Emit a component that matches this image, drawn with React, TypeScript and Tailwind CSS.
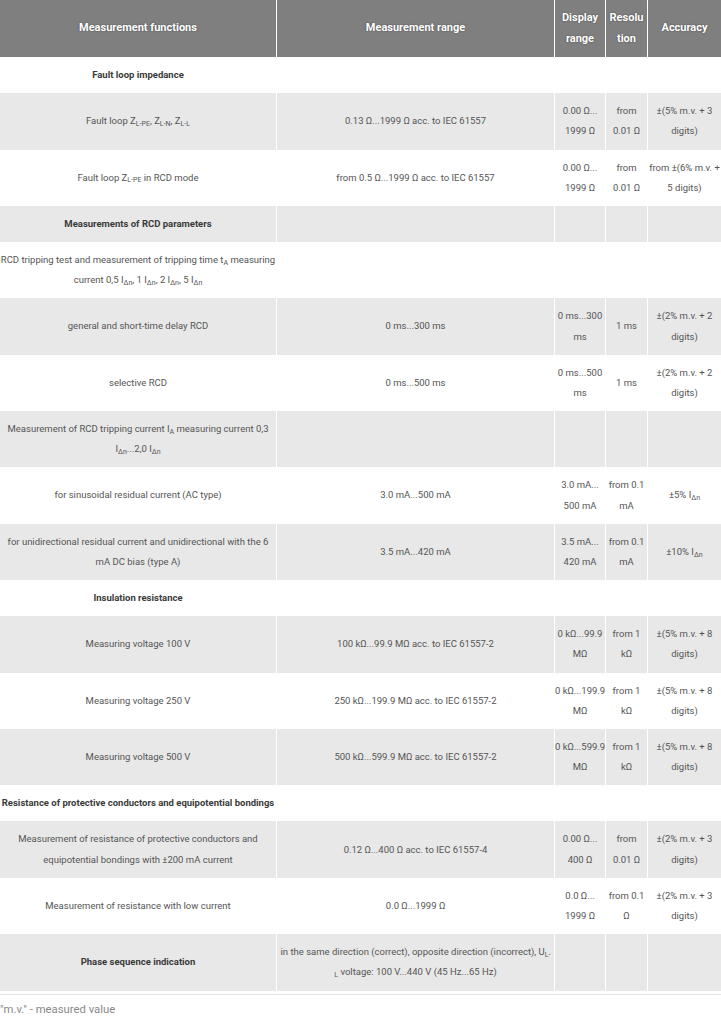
import type { ReactNode } from "react";

type Row = {
  cells: ReactNode[];
  title?: boolean;
};

const S = ({ children }: { children: ReactNode }) => (
  <sub className="text-[7px]">{children}</sub>
);

const Idn = () => (
  <>
    I<S>Δn</S>
  </>
);

const rows: Row[] = [
  { title: true, cells: ["Fault loop impedance", "", "", "", ""] },
  {
    cells: [
      <>
        Fault loop Z<S>L-PE</S>, Z<S>L-N</S>, Z<S>L-L</S>
      </>,
      "0.13 Ω...1999 Ω acc. to IEC 61557",
      "0.00 Ω... 1999 Ω",
      "from 0.01 Ω",
      "±(5% m.v. + 3 digits)",
    ],
  },
  {
    cells: [
      <>
        Fault loop Z<S>L-PE</S> in RCD mode
      </>,
      "from 0.5 Ω...1999 Ω acc. to IEC 61557",
      "0.00 Ω... 1999 Ω",
      "from 0.01 Ω",
      "from ±(6% m.v. + 5 digits)",
    ],
  },
  { title: true, cells: ["Measurements of RCD parameters", "", "", "", ""] },
  {
    cells: [
      <>
        RCD tripping test and measurement of tripping time t<S>A</S> measuring current 0,5 <Idn />, 1{" "}
        <Idn />, 2 <Idn />, 5 <Idn />
      </>,
      "",
      "",
      "",
      "",
    ],
  },
  {
    cells: [
      "general and short-time delay RCD",
      "0 ms...300 ms",
      "0 ms...300 ms",
      "1 ms",
      "±(2% m.v. + 2 digits)",
    ],
  },
  {
    cells: ["selective RCD", "0 ms...500 ms", "0 ms...500 ms", "1 ms", "±(2% m.v. + 2 digits)"],
  },
  {
    cells: [
      <>
        Measurement of RCD tripping current I<S>A</S> measuring current 0,3 <Idn />
        ...2,0 <Idn />
      </>,
      "",
      "",
      "",
      "",
    ],
  },
  {
    cells: [
      "for sinusoidal residual current (AC type)",
      "3.0 mA...500 mA",
      "3.0 mA... 500 mA",
      "from 0.1 mA",
      <>
        ±5% <Idn />
      </>,
    ],
  },
  {
    cells: [
      "for unidirectional residual current and unidirectional with the 6 mA DC bias (type A)",
      "3.5 mA...420 mA",
      "3.5 mA... 420 mA",
      "from 0.1 mA",
      <>
        ±10% <Idn />
      </>,
    ],
  },
  { title: true, cells: ["Insulation resistance", "", "", "", ""] },
  {
    cells: [
      "Measuring voltage 100 V",
      "100 kΩ...99.9 MΩ acc. to IEC 61557-2",
      "0\u00a0kΩ...99.9 MΩ",
      "from 1 kΩ",
      "±(5% m.v. + 8 digits)",
    ],
  },
  {
    cells: [
      "Measuring voltage 250 V",
      "250 kΩ...199.9 MΩ acc. to IEC 61557-2",
      "0\u00a0kΩ...199.9 MΩ",
      "from 1 kΩ",
      "±(5% m.v. + 8 digits)",
    ],
  },
  {
    cells: [
      "Measuring voltage 500 V",
      "500 kΩ...599.9 MΩ acc. to IEC 61557-2",
      "0\u00a0kΩ...599.9 MΩ",
      "from 1 kΩ",
      "±(5% m.v. + 8 digits)",
    ],
  },
  {
    title: true,
    cells: ["Resistance of protective conductors and equipotential bondings", "", "", "", ""],
  },
  {
    cells: [
      "Measurement of resistance of protective conductors and equipotential bondings with ±200 mA current",
      "0.12 Ω...400 Ω acc. to IEC 61557-4",
      "0.00 Ω... 400 Ω",
      "from 0.01 Ω",
      "±(2% m.v. + 3 digits)",
    ],
  },
  {
    cells: [
      "Measurement of resistance with low current",
      "0.0 Ω...1999 Ω",
      "0.0 Ω... 1999 Ω",
      "from 0.1 Ω",
      "±(2% m.v. + 3 digits)",
    ],
  },
  {
    title: true,
    cells: [
      "Phase sequence indication",
      <>
        in the same direction (correct), opposite direction (incorrect), U<S>L-</S>
        <br />
        <S>L</S> voltage: 100 V...440 V (45 Hz...65 Hz)
      </>,
      "",
      "",
      "",
    ],
  },
];

const headers = [
  { label: "Measurement functions", w: "w-[277px]" },
  { label: "Measurement range", w: "w-[278px]" },
  { label: "Display range", w: "w-[51px]" },
  { label: "Resolution", w: "w-[42px]" },
  { label: "Accuracy", w: "w-[73px]" },
];

export default function App() {
  return (
    <div className="w-[721px] bg-white font-['Roboto',sans-serif]">
      <table className="w-[721px] table-fixed border-separate border-spacing-0">
        <thead>
          <tr className="bg-[#7f7f7f]">
            {headers.map((h, i) => (
              <th
                key={h.label}
                className={`${h.w} ${
                  i < 4 ? "border-r border-white" : ""
                } px-0 py-2 text-center align-middle text-[11px] font-bold leading-[20.5px] text-white [text-shadow:0_0_2px_rgba(0,0,0,0.45)]`}
              >
                {h.label === "Resolution" ? (
                  <>
                    Resolu
                    <br />
                    tion
                  </>
                ) : (
                  h.label
                )}
              </th>
            ))}
          </tr>
        </thead>
        <tbody>
          {rows.map((r, ri) => (
            <tr key={ri} className={ri % 2 === 1 ? "bg-[#e8e8e8]" : "bg-white"}>
              {r.cells.map((c, ci) => (
                <td
                  key={ci}
                  className={`${ci < 4 ? "border-r border-white" : ""} px-0 py-2 text-center align-middle text-[9.5px] leading-[20.17px] ${
                    r.title && ci === 0 ? "font-bold text-[#3a3a3a]" : "text-[#555]"
                  }`}
                >
                  {c}
                </td>
              ))}
            </tr>
          ))}
        </tbody>
      </table>
      <div className="mt-[3px] border-t border-[#e4e4e4] pt-2 text-[11.3px] leading-[14px] text-[#888]">
        "m.v." - measured value
      </div>
    </div>
  );
}
